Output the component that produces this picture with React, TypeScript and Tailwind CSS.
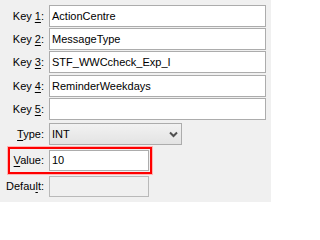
import React from "react";

const font = { fontFamily: '"Liberation Sans", Arial, sans-serif' };

function Label({ children, className = "" }: { children: React.ReactNode; className?: string }) {
  return (
    <div className={`w-[44px] shrink-0 text-right text-[11px] leading-none text-black ${className}`}>{children}</div>
  );
}

function TextBox({ value, w, h, disabled, className = "" }: { value?: string; w: string; h: string; disabled?: boolean; className?: string }) {
  return (
    <div
      className={`${w} ${h} ml-[5px] flex items-center border pl-[2px] text-[11px] leading-none text-black ${
        disabled ? "border-[#b9b9b9] bg-[#f0f0f0]" : "border-[#acacac] bg-white"
      } ${className}`}
    >
      {value}
    </div>
  );
}

function KeyRow({ n, value, mt }: { n: string; value: string; mt: string }) {
  return (
    <div className={`flex items-center ${mt}`}>
      <Label>
        Key <u className="underline-offset-[2px]">{n}</u>:
      </Label>
      <TextBox value={value} w="w-[217px]" h="h-[22px]" />
    </div>
  );
}

export default function App() {
  return (
    <div className="relative flex h-[202px] w-[271px] flex-col bg-[#f0f0f0] pt-[5px]" style={font}>
      <KeyRow n="1" value="ActionCentre" mt="" />
      <KeyRow n="2" value="MessageType" mt="mt-[1px]" />
      <KeyRow n="3" value="STF_WWCcheck_Exp_I" mt="mt-[1px]" />
      <KeyRow n="4" value="ReminderWeekdays" mt="mt-[2px]" />
      <KeyRow n="5" value="" mt="mt-[1px]" />

      <div className="mt-[3px] flex items-center">
        <Label>
          <u className="underline-offset-[2px]">T</u>ype:
        </Label>
        <div className="ml-[5px] flex h-[22px] w-[133px] items-center justify-between border border-[#acacac] bg-gradient-to-b from-[#f2f2f2] to-[#e3e3e3] pl-[2px] pr-[3px] text-[11px] leading-none text-black">
          <span>INT</span>
          <svg width="9" height="7" viewBox="0 0 9 7" className="mt-[1px]">
            <polyline points="1,1.5 4.5,5 8,1.5" fill="none" stroke="#505050" strokeWidth="2" />
          </svg>
        </div>
      </div>

      <div className="relative mt-[5px] flex items-center">
        <Label>
          <u className="underline-offset-[2px]">V</u>alue:
        </Label>
        <TextBox value="10" w="w-[100px]" h="h-[21px]" />
        <div className="pointer-events-none absolute left-[8px] top-[-3px] h-[27px] w-[144px] border-2 border-[#ff0000] shadow-[0_0_0_1px_#ffb4b4]" />
      </div>

      <div className="mt-[5px] flex items-center">
        <Label>
          Defau<u className="underline-offset-[2px]">l</u>t:
        </Label>
        <TextBox w="w-[100px]" h="h-[21px]" disabled />
      </div>
    </div>
  );
}
